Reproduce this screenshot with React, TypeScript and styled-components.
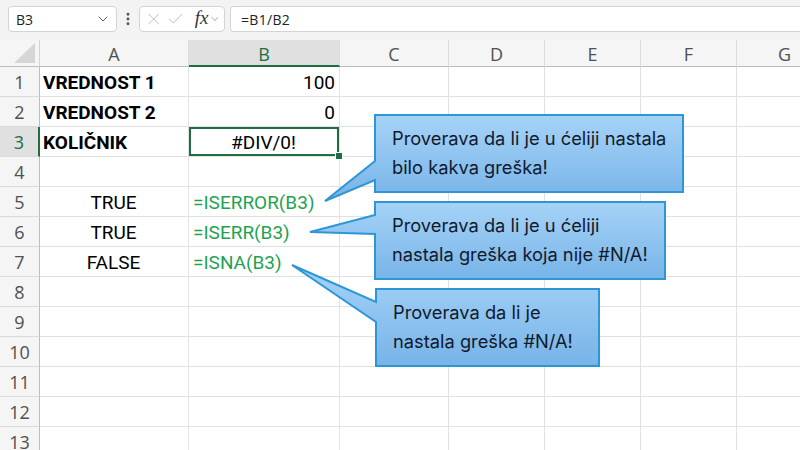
import React from "react";
import styled, { createGlobalStyle } from "styled-components";
import { ChevronDown, EllipsisVertical, X, Check } from "lucide-react";

const GlobalStyle = createGlobalStyle`
  html, body {
    margin: 0;
    padding: 0;
    background: #ffffff;
    overflow: hidden;
  }
  body {
    font-family: Roboto, "Liberation Sans", sans-serif;
  }
`;

const GREEN = "#1e6e42";
const COLS = [
  { name: "A", width: 149 },
  { name: "B", width: 151 },
  { name: "C", width: 109 },
  { name: "D", width: 96 },
  { name: "E", width: 96 },
  { name: "F", width: 96 },
  { name: "G", width: 96 },
];
const ROW_COUNT = 13;
const ACTIVE_COL = "B";
const ACTIVE_ROW = 3;

type CellData = {
  text: string;
  bold?: boolean;
  align?: "left" | "center" | "right";
  formula?: boolean;
};

const data: Record<string, CellData> = {
  A1: { text: "VREDNOST 1", bold: true },
  B1: { text: "100", align: "right" },
  A2: { text: "VREDNOST 2", bold: true },
  B2: { text: "0", align: "right" },
  A3: { text: "KOLIČNIK", bold: true },
  B3: { text: "#DIV/0!", align: "center" },
  A5: { text: "TRUE", align: "center" },
  B5: { text: "=ISERROR(B3)", formula: true },
  A6: { text: "TRUE", align: "center" },
  B6: { text: "=ISERR(B3)", formula: true },
  A7: { text: "FALSE", align: "center" },
  B7: { text: "=ISNA(B3)", formula: true },
};

const callouts = [
  {
    x: 375,
    y: 115,
    w: 308,
    h: 77,
    tip: [-50, 86],
    base: [46, 65],
    lines: ["Proverava da li je u ćeliji nastala", "bilo kakva greška!"],
  },
  {
    x: 375,
    y: 202,
    w: 290,
    h: 77,
    tip: [-65, 30],
    base: [13, 32],
    lines: ["Proverava da li je u ćeliji", "nastala greška koja nije #N/A!"],
  },
  {
    x: 376,
    y: 289,
    w: 223,
    h: 77,
    tip: [-84, -24],
    base: [13, 33],
    lines: ["Proverava da li je", "nastala greška #N/A!"],
  },
];

function Callout({ c, id }: { c: (typeof callouts)[number]; id: number }) {
  const d = `M0,0 H${c.w} V${c.h} H0 V${c.base[1]} L${c.tip[0]},${c.tip[1]} L0,${c.base[0]} Z`;
  return (
    <CalloutBox $x={c.x} $y={c.y} $w={c.w} $h={c.h}>
      <CalloutShape width={c.w} height={c.h}>
        <defs>
          <linearGradient id={`cg${id}`} x1="0" y1="0" x2="0" y2="1">
            <stop offset="0" stopColor="#a6d3f7" />
            <stop offset="1" stopColor="#77b4e8" />
          </linearGradient>
        </defs>
        <path d={d} fill={`url(#cg${id})`} stroke="#2d96d6" strokeWidth={2} />
      </CalloutShape>
      <CalloutText>
        {c.lines.map((l) => (
          <div key={l}>{l}</div>
        ))}
      </CalloutText>
    </CalloutBox>
  );
}

export default function App() {
  return (
    <>
      <GlobalStyle />
      <Page>
        <Toolbar>
          <NameBox>
            <span>B3</span>
            <ChevronDown size={16} strokeWidth={1.4} color="#555" />
          </NameBox>
          <Dots>
            <EllipsisVertical size={16} strokeWidth={2.4} color="#555" />
          </Dots>
          <FxBox>
            <X size={20} strokeWidth={1.1} color="#b5b5b5" />
            <Check size={20} strokeWidth={1.1} color="#b5b5b5" />
            <FxLabel>fx</FxLabel>
            <ChevronDown size={12} strokeWidth={1.4} color="#777" />
          </FxBox>
          <FormulaInput>=B1/B2</FormulaInput>
        </Toolbar>
        <Sheet>
          <Corner>
            <svg width="21" height="20" viewBox="0 0 21 20">
              <polygon points="21,0 21,20 0,20" fill="#d6d6d6" />
            </svg>
          </Corner>
          {COLS.map((c) => (
            <ColHeader key={c.name} $active={c.name === ACTIVE_COL}>
              {c.name}
            </ColHeader>
          ))}
          {Array.from({ length: ROW_COUNT }, (_, i) => i + 1).map((r) => (
            <React.Fragment key={r}>
              <RowHeader $active={r === ACTIVE_ROW}>{r}</RowHeader>
              {COLS.map((c) => {
                const ref = `${c.name}${r}`;
                const cell = data[ref];
                return (
                  <Cell
                    key={ref}
                    $align={cell?.align ?? "left"}
                    $bold={!!cell?.bold}
                    $formula={!!cell?.formula}
                    $selected={c.name === ACTIVE_COL && r === ACTIVE_ROW}
                  >
                    {cell?.text}
                  </Cell>
                );
              })}
            </React.Fragment>
          ))}
        </Sheet>
        {callouts.map((c, i) => (
          <Callout key={i} c={c} id={i} />
        ))}
      </Page>
    </>
  );
}

const Page = styled.div`
  position: relative;
  width: 800px;
  height: 450px;
  overflow: hidden;
  background: #fff;
`;

const Toolbar = styled.div`
  height: 40px;
  background: #f3f3f3;
  display: flex;
  align-items: flex-start;
  padding: 6px 0 0 8px;
  box-sizing: border-box;
`;

const InputBox = styled.div`
  height: 26px;
  box-sizing: border-box;
  background: #fff;
  border: 1px solid #d4d4d4;
  border-radius: 4px;
  display: flex;
  align-items: center;
  font-family: "Open Sans", "Noto Sans", sans-serif;
  font-size: 14px;
  color: #222;
`;

const NameBox = styled(InputBox)`
  width: 109px;
  justify-content: space-between;
  padding: 0 5px 0 7px;
`;

const Dots = styled.div`
  width: 20px;
  height: 26px;
  display: flex;
  align-items: center;
  justify-content: center;
  margin-left: 1px;
`;

const FxBox = styled(InputBox)`
  width: 86px;
  margin-left: 1px;
  padding: 0 3px 0 4px;
  gap: 3px;
`;

const FxLabel = styled.span`
  font-family: "Liberation Serif", "DejaVu Serif", serif;
  font-style: italic;
  font-size: 19px;
  color: #333;
  margin-left: 6px;
  margin-right: -2px;
  margin-top: -2px;
`;

const FormulaInput = styled(InputBox)`
  flex: 1;
  margin-left: 5px;
  border-right: none;
  border-radius: 4px 0 0 4px;
  padding-left: 10px;
  letter-spacing: 0.3px;
`;

const Sheet = styled.div`
  display: grid;
  grid-template-columns: 40px ${COLS.map((c) => `${c.width}px`).join(" ")};
  grid-template-rows: 27px repeat(${ROW_COUNT}, 30px);
  width: max-content;
`;

const HeaderBase = styled.div`
  box-sizing: border-box;
  background: #f5f5f5;
  display: flex;
  align-items: center;
  justify-content: center;
  font-family: "Open Sans", "Noto Sans", sans-serif;
  font-size: 18px;
  color: #505050;
`;

const Corner = styled(HeaderBase)`
  border-right: 1px solid #d4d4d4;
  border-bottom: 1px solid #bdbdbd;
  align-items: flex-end;
  justify-content: flex-end;
  padding: 0 4px 3px 0;
`;

const ColHeader = styled(HeaderBase)<{ $active: boolean }>`
  border-right: 1px solid #dadada;
  border-bottom: ${(p) => (p.$active ? `2px solid ${GREEN}` : "1px solid #bdbdbd")};
  background: ${(p) => (p.$active ? "#e0e0e0" : "#f5f5f5")};
  color: ${(p) => (p.$active ? GREEN : "#505050")};
  padding-top: 2px;
`;

const RowHeader = styled(HeaderBase)<{ $active: boolean }>`
  border-right: ${(p) => (p.$active ? `2px solid ${GREEN}` : "1px solid #bdbdbd")};
  border-bottom: 1px solid #dadada;
  background: ${(p) => (p.$active ? "#e0e0e0" : "#f5f5f5")};
  color: ${(p) => (p.$active ? GREEN : "#505050")};
`;

const Cell = styled.div<{
  $align: "left" | "center" | "right";
  $bold: boolean;
  $formula: boolean;
  $selected: boolean;
}>`
  position: relative;
  box-sizing: border-box;
  border-right: 1px solid #e1e1e1;
  border-bottom: 1px solid #e1e1e1;
  display: flex;
  align-items: center;
  justify-content: ${(p) =>
    p.$align === "right" ? "flex-end" : p.$align === "center" ? "center" : "flex-start"};
  padding: 1px 4px 0 ${(p) => (p.$formula ? 4 : 3)}px;
  white-space: nowrap;
  font-family: Roboto, "Liberation Sans", sans-serif;
  font-size: 19px;
  font-weight: ${(p) => (p.$bold ? 700 : 400)};
  color: ${(p) => (p.$formula ? "#1fa352" : "#000")};
  ${(p) =>
    p.$selected &&
    `
    box-shadow: inset 0 0 0 2px ${GREEN};
    &::after {
      content: "";
      position: absolute;
      right: -4px;
      bottom: -4px;
      width: 6px;
      height: 6px;
      background: ${GREEN};
      border: 1px solid #fff;
      z-index: 2;
    }
  `}
`;

const CalloutBox = styled.div<{ $x: number; $y: number; $w: number; $h: number }>`
  position: absolute;
  left: ${(p) => p.$x}px;
  top: ${(p) => p.$y}px;
  width: ${(p) => p.$w}px;
  height: ${(p) => p.$h}px;
  z-index: 5;
`;

const CalloutShape = styled.svg`
  position: absolute;
  left: 0;
  top: 0;
  overflow: visible;
`;

const CalloutText = styled.div`
  position: relative;
  height: 100%;
  box-sizing: border-box;
  display: flex;
  flex-direction: column;
  justify-content: center;
  padding: 0 0 1px 17px;
  font-family: Inter, "Noto Sans", sans-serif;
  font-size: 18.3px;
  line-height: 29px;
  color: #111a2b;
  white-space: nowrap;
`;
